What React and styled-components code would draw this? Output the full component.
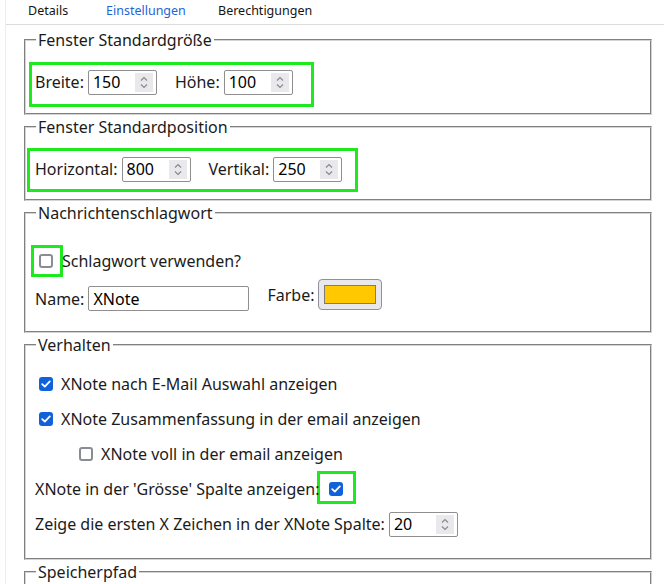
import React from 'react';
import styled, { createGlobalStyle } from 'styled-components';

const GlobalStyle = createGlobalStyle`
    html, body {
        margin: 0;
        padding: 0;
        background: #ffffff;
    }
    body {
        font-family: "Noto Sans", "Open Sans", sans-serif;
        color: #1b1b1b;
    }
`;

const Page = styled.div`
    width: 664px;
    height: 584px;
    overflow: hidden;
    padding-left: 5px;
    box-sizing: border-box;
`;

const Panel = styled.div`
    border-left: 1px solid #ececec;
    height: 100%;
`;

const TabBar = styled.div`
    display: flex;
    height: 24px;
    border-bottom: 1px solid #dcdcdc;
    padding-left: 22px;
    font-size: 12.5px;
    line-height: 22px;
`;

const Tab = styled.div`
    width: ${p => (p.w ? `${p.w}px` : 'auto')};
    color: ${p => (p.active ? '#1f63d6' : '#141414')};
`;

const Content = styled.div`
    display: flex;
    flex-direction: column;
    gap: 2px;
    padding: 5px 12px 0 18px;
`;

const Group = styled.fieldset`
    margin: 0;
    border: 2px groove #d4d4d4;
    padding: ${p => p.pad || '19px 9px 18px'};
    font-size: 16px;

    legend {
        padding: 0 2px;
        margin-left: 1px;
        font-size: 16px;
        line-height: 20px;
    }
`;

const Rows = styled.div`
    display: flex;
    flex-direction: column;
    gap: ${p => p.gap || '9px'};
`;

const Row = styled.div`
    display: flex;
    align-items: ${p => p.align || 'center'};
    min-height: 26px;
    padding-left: ${p => p.indent || 0}px;
`;

const Label = styled.span`
    position: relative;
    z-index: 1;
`;

const Marked = styled.div`
    position: relative;
`;

// green annotation frame drawn over a row
const Mark = styled.div`
    position: absolute;
    top: ${p => p.t}px;
    left: ${p => p.l}px;
    width: ${p => p.w}px;
    height: ${p => p.h}px;
    box-sizing: border-box;
    border: 3px solid #1ee81e;
    pointer-events: none;
`;

const Pair = styled.div`
    display: flex;
    align-items: ${p => p.align || 'center'};
    gap: 4px;
    & + & {
        margin-left: 18px;
    }
`;

const Box = styled.div`
    position: relative;
    width: ${p => p.w || 69}px;
    height: 25px;
    box-sizing: border-box;
    border: 1px solid #8f8f8f;
    border-radius: 2px;
    padding-left: 4px;
    display: flex;
    align-items: center;
    font-size: 16px;
    color: #000;
`;

const Spin = styled.div`
    position: absolute;
    right: 3px;
    top: 2px;
    width: 18px;
    height: 19px;
    background: #e9e9ed;
    display: flex;
    align-items: center;
    justify-content: center;
`;

const Check = styled.span`
    position: relative;
    width: 14px;
    height: 14px;
    box-sizing: border-box;
    border-radius: 3px;
    flex-shrink: 0;
    display: inline-flex;
    align-items: center;
    justify-content: center;
    background: ${p => (p.on ? '#0f62dc' : '#fff')};
    border: ${p => (p.on ? 'none' : '2px solid #8b8b98')};
    margin: 0 ${p => p.mr ?? 8}px 0 ${p => p.ml ?? 4}px;
`;

const ColorButton = styled.div`
    width: 64px;
    height: 31px;
    box-sizing: border-box;
    border: 1px solid #8f8f9d;
    border-radius: 4px;
    background: #e9e9ed;
    display: flex;
    align-items: center;
    justify-content: center;
    margin-bottom: 1px;
`;

const Swatch = styled.div`
    width: 52px;
    height: 19px;
    box-sizing: border-box;
    background: #ffc800;
    border: 1px solid #7c7c7c;
`;

function Spinner() {
    return (
        <Spin>
            <svg width="10" height="15" viewBox="0 0 10 15" fill="none" stroke="#8a8a8a" strokeWidth="1.2">
                <path d="M2 5.5 L5 2.5 L8 5.5" />
                <path d="M2 9.5 L5 12.5 L8 9.5" />
            </svg>
        </Spin>
    );
}

function NumberBox({ value, w }) {
    return (
        <Box w={w}>
            {value}
            <Spinner />
        </Box>
    );
}

function CheckBox({ on, ml, mr, children }) {
    return (
        <Check on={on} ml={ml} mr={mr}>
            {on && (
                <svg width="10" height="8" viewBox="0 0 10 8" fill="none" stroke="#fff" strokeWidth="1.8" strokeLinecap="round" strokeLinejoin="round">
                    <path d="M1.2 4.2 L3.8 6.6 L8.8 1.4" />
                </svg>
            )}
            {children}
        </Check>
    );
}

export default function App() {
    return (
        <Page>
            <GlobalStyle />
            <Panel>
                <TabBar>
                    <Tab w={78}>Details</Tab>
                    <Tab w={112} active>Einstellungen</Tab>
                    <Tab>Berechtigungen</Tab>
                </TabBar>
                <Content>
                    <Group>
                        <legend>Fenster Standardgröße</legend>
                        <Marked>
                            <Mark t={-7} l={-6} w={285} h={45} />
                            <Row>
                                <Pair>Breite: <NumberBox value="150" /></Pair>
                                <Pair>Höhe: <NumberBox value="100" /></Pair>
                            </Row>
                        </Marked>
                    </Group>
                    <Group pad="19px 9px 17px">
                        <legend>Fenster Standardposition</legend>
                        <Marked>
                            <Mark t={-8} l={-8} w={331} h={44} />
                            <Row>
                                <Pair>Horizontal: <NumberBox value="800" /></Pair>
                                <Pair>Vertikal: <NumberBox value="250" /></Pair>
                            </Row>
                        </Marked>
                    </Group>
                    <Group pad="25px 9px 20px">
                        <legend>Nachrichtenschlagwort</legend>
                        <Rows gap="5px">
                            <Marked>
                                <Mark t={-3} l={-4} w={32} h={32} />
                                <Row>
                                    <CheckBox mr={9} />
                                    <Label>Schlagwort verwenden?</Label>
                                </Row>
                            </Marked>
                            <Row align="flex-end">
                                <Pair>Name: <Box w={161}>XNote</Box></Pair>
                                <Pair>Farbe: <ColorButton><Swatch /></ColorButton></Pair>
                            </Row>
                        </Rows>
                    </Group>
                    <Group pad="16px 9px 21px">
                        <legend>Verhalten</legend>
                        <Rows>
                            <Row><CheckBox on />XNote nach E-Mail Auswahl anzeigen</Row>
                            <Row><CheckBox on />XNote Zusammenfassung in der email anzeigen</Row>
                            <Row indent={40}><CheckBox />XNote voll in der email anzeigen</Row>
                            <Row>
                                <Label>XNote in der 'Grösse' Spalte anzeigen:</Label>
                                <CheckBox on ml={10} mr={0}>
                                    <Mark t={-11} l={-12} w={39} h={33} />
                                </CheckBox>
                            </Row>
                            <Row>
                                <Pair>Zeige die ersten X Zeichen in der XNote Spalte: <NumberBox value="20" /></Pair>
                            </Row>
                        </Rows>
                    </Group>
                    <Group>
                        <legend>Speicherpfad</legend>
                        <Row />
                    </Group>
                </Content>
            </Panel>
        </Page>
    );
}
